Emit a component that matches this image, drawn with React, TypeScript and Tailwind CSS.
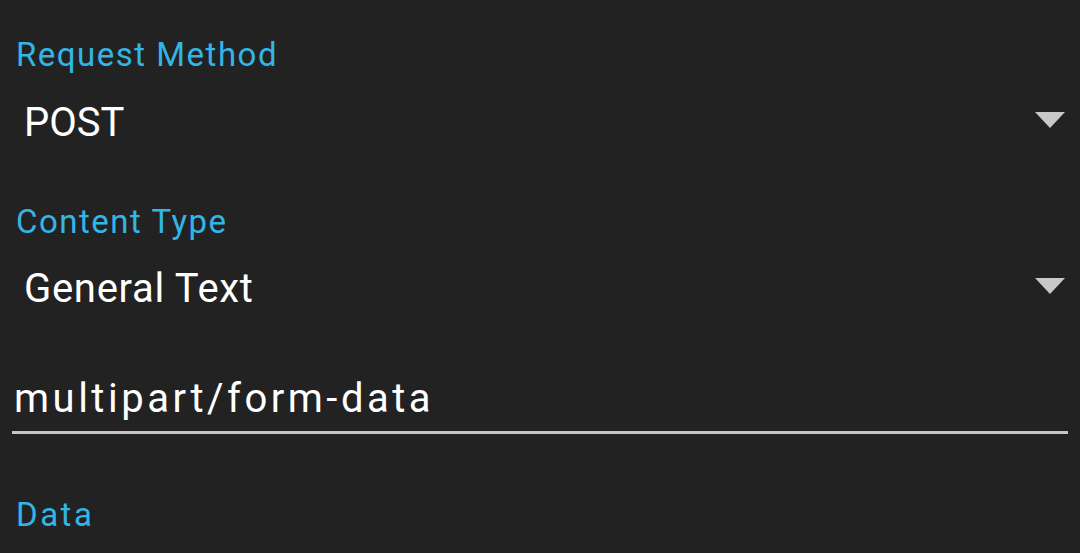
import React from "react";

function Caret() {
  return (
    <svg width="30" height="16" viewBox="0 0 30 16" className="block">
      <polygon points="0,0 30,0 15,16" fill="#c8c8c8" />
    </svg>
  );
}

export default function App() {
  const font = { fontFamily: "Roboto, 'Noto Sans', sans-serif" };
  return (
    <div className="w-[1080px] h-[553px] bg-[#222222] overflow-hidden" style={font}>
      <div className="pt-[31px]">
        <div className="h-[48px] leading-[48px] text-[33px] tracking-[1.5px] text-[#33b5e5] pl-[16px]">Request Method</div>
        <div className="mt-[12px] h-[64px] flex items-center justify-between pl-[24px] pr-[15px]">
          <span className="text-[40px] leading-[64px] text-white">POST</span>
          <div className="mt-[-6px]"><Caret /></div>
        </div>
        <div className="mt-[43px] h-[48px] leading-[48px] text-[33px] tracking-[1.5px] text-[#33b5e5] pl-[16px]">Content Type</div>
        <div className="mt-[11px] h-[64px] flex items-center justify-between pl-[24px] pr-[15px]">
          <span className="text-[40px] leading-[64px] tracking-[0.7px] text-white">General Text</span>
          <div className="mt-[-6px]"><Caret /></div>
        </div>
        <div className="mt-[46px] mx-[12px] border-b-[3px] border-[#c4c4c4]">
          <div className="h-[64px] leading-[64px] text-[40px] tracking-[3.5px] text-white pl-[2px]">multipart/form-data</div>
        </div>
        <div className="mt-[57px] h-[48px] leading-[48px] text-[33px] tracking-[2.5px] text-[#33b5e5] pl-[16px]">Data</div>
      </div>
    </div>
  );
}
